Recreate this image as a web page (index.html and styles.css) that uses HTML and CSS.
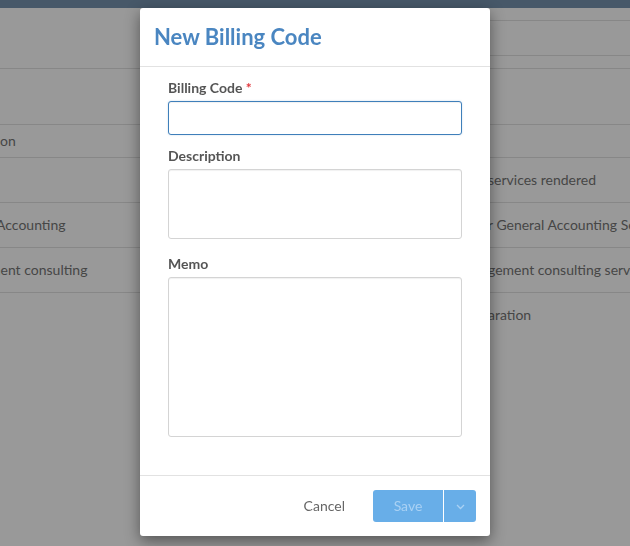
FILE: index.html
```html
<!DOCTYPE html>
<html>
<head>
<meta charset="utf-8">
<link rel="stylesheet" href="styles.css">
</head>
<body>
<div class="page">
  <div class="topbar"></div>
  <div class="toolbar"><div class="toolbar-panel"></div></div>
  <div class="section"></div>
  <div class="row head"><div class="cell-left">on</div><div class="cell-right"></div></div>
  <div class="row"><div class="cell-left"></div><div class="cell-right">services rendered</div></div>
  <div class="row"><div class="cell-left"><span class="cut-a">Accounting</span></div><div class="cell-right">r General Accounting Services</div></div>
  <div class="row"><div class="cell-left"><span class="cut-m">ment consulting</span></div><div class="cell-right">gement consulting services</div></div>
  <div class="row last"><div class="cell-left"></div><div class="cell-right">aration</div></div>
</div>

<div class="overlay">
  <div class="modal">
    <div class="modal-header">
      <h1 class="modal-title">New Billing Code</h1>
    </div>
    <div class="modal-body">
      <div class="group">
        <label class="label">Billing Code <span class="req">*</span></label>
        <input class="input focused" type="text">
      </div>
      <div class="group group-area">
        <label class="label">Description</label>
        <textarea class="input area-sm"></textarea>
      </div>
      <div class="group group-area">
        <label class="label">Memo</label>
        <textarea class="input area-lg"></textarea>
      </div>
    </div>
    <div class="modal-footer">
      <button class="btn-link">Cancel</button>
      <div class="btn-group">
        <button class="btn-save">Save</button>
        <button class="btn-caret">
          <svg width="9" height="6" viewBox="0 0 9 6"><polyline points="1,1 4.5,4.5 8,1" fill="none" stroke="#a9d1f4" stroke-width="1.3"/></svg>
        </button>
      </div>
    </div>
  </div>
</div>
</body>
</html>
```

FILE: styles.css
```css
* { box-sizing: border-box; }
html, body {
  margin: 0;
  padding: 0;
  width: 630px;
  height: 546px;
  overflow: hidden;
  font-family: Lato, "Open Sans", sans-serif;
}
.page {
  width: 630px;
  height: 546px;
  background: #999999;
  color: #464646;
  font-size: 14px;
  overflow: hidden;
}
.topbar {
  height: 8px;
  background: #475869;
}
.toolbar {
  height: 61px;
  border-bottom: 1px solid #878787;
  padding-top: 12px;
  display: flex;
  justify-content: flex-end;
}
.toolbar-panel {
  width: 330px;
  height: 36px;
  border-top: 1px solid #878787;
  border-bottom: 1px solid #878787;
}
.section {
  height: 56px;
  border-bottom: 1px solid #878787;
}
.row {
  height: 45px;
  border-bottom: 1px solid #878787;
  display: flex;
  align-items: center;
  white-space: nowrap;
}
.row.head {
  height: 33px;
}
.row.last { border-bottom: none; padding-bottom: 2px; }
.cell-left {
  width: 488px;
  overflow: hidden;
  padding-bottom: 1px;
}
.cell-right {
  flex: 1;
  overflow: hidden;
  padding-bottom: 1px;
}
.cut-a { margin-left: -4px; }
.cut-m { margin-left: -11px; }

.overlay {
  position: fixed;
  inset: 0;
  display: flex;
  justify-content: center;
  align-items: flex-start;
  padding-top: 8px;
}
.modal {
  width: 350px;
  background: #fff;
  border-radius: 3px;
  box-shadow: 0 5px 15px rgba(0,0,0,0.45);
}
.modal-header {
  height: 59px;
  border-bottom: 1px solid #e2e2e2;
  display: flex;
  align-items: center;
  padding: 0 14px;
}
.modal-title {
  margin: 0;
  font-size: 22px;
  font-weight: 700;
  line-height: 1.2;
  color: #4a86c1;
  padding-top: 1px;
}
.modal-body {
  padding: 12px 28px 22px;
}
.group {
  margin-bottom: 12px;
}
.group-area {
  margin-bottom: 16px;
}
.label {
  display: block;
  font-size: 14px;
  font-weight: 700;
  line-height: 18px;
  color: #555;
  margin-bottom: 4px;
}
.req { color: #e2343a; }
.input {
  display: block;
  width: 100%;
  height: 34px;
  border: 1px solid #d4d4d4;
  border-radius: 3px;
  box-shadow: inset 0 1px 1px rgba(0,0,0,0.06);
  font-family: Lato, sans-serif;
  font-size: 14px;
  padding: 6px 10px;
  resize: none;
  outline: none;
  background: #fff;
}
.input.focused {
  border-color: #3f7fba;
  box-shadow: inset 0 1px 1px rgba(0,0,0,0.06), 0 0 2px rgba(63,127,186,0.3);
}
.area-sm { height: 70px; }
.area-lg { height: 160px; }
.modal-footer {
  border-top: 1px solid #e2e2e2;
  padding: 14px;
  display: flex;
  justify-content: flex-end;
  align-items: center;
}
.btn-link {
  border: none;
  background: none;
  font-family: Lato, sans-serif;
  font-size: 14px;
  color: #666;
  padding: 5px 12px 7px;
  margin-right: 16px;
}
.btn-group {
  display: flex;
  height: 32px;
}
.btn-save, .btn-caret {
  border: none;
  background: #68aee8;
  color: #a9d1f4;
  font-family: Lato, sans-serif;
  font-size: 14px;
  height: 32px;
  padding: 0;
}
.btn-save {
  width: 70px;
  border-radius: 3px 0 0 3px;
  margin-right: 1px;
  padding-bottom: 2px;
}
.btn-caret {
  width: 32px;
  border-radius: 0 3px 3px 0;
  display: flex;
  align-items: center;
  justify-content: center;
  padding-top: 1px;
}
```
